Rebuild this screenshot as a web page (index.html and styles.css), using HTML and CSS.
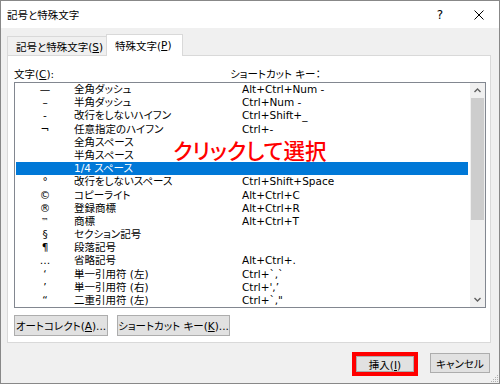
FILE: index.html
```html
<!DOCTYPE html>
<html lang="ja">
<head>
    <meta charset="UTF-8">
    <title>記号と特殊文字</title>
    <link rel="stylesheet" href="styles.css">
</head>
<body>
    <div class="window">
        <div class="titlebar">
            <span class="title">記号と特殊文字</span>
            <span class="help">?</span>
            <svg class="close" width="10" height="10" viewBox="0 0 10 10"><path d="M0.5 0.5 L9.5 9.5 M9.5 0.5 L0.5 9.5" stroke="#000" stroke-width="1" fill="none"/></svg>
        </div>
        <div class="content">
            <div class="tabs">
                <div class="tab">記号と特殊文字(<u>S</u>)</div>
                <div class="tab active">特殊文字(<u>P</u>)</div>
            </div>
            <div class="panel">
                <div class="headers">
                    <span class="col-char">文字(<u>C</u>):</span>
                    <span>ショートカット キー：</span>
                </div>
                <div class="listbox">
                    <div class="rows">
                        <div class="row"><span class="sym">—</span><span class="name">全角ダッシュ</span><span class="key">Alt+Ctrl+Num -</span></div>
                        <div class="row"><span class="sym">–</span><span class="name">半角ダッシュ</span><span class="key">Ctrl+Num -</span></div>
                        <div class="row"><span class="sym">-</span><span class="name">改行をしないハイフン</span><span class="key">Ctrl+Shift+_</span></div>
                        <div class="row"><span class="sym">¬</span><span class="name">任意指定のハイフン</span><span class="key">Ctrl+-</span></div>
                        <div class="row"><span class="sym"></span><span class="name">全角スペース</span><span class="key"></span></div>
                        <div class="row"><span class="sym"></span><span class="name">半角スペース</span><span class="key"></span></div>
                        <div class="row selected"><span class="sym"></span><span class="name">1/4 スペース</span><span class="key"></span></div>
                        <div class="row"><span class="sym">°</span><span class="name">改行をしないスペース</span><span class="key">Ctrl+Shift+Space</span></div>
                        <div class="row"><span class="sym">©</span><span class="name">コピーライト</span><span class="key">Alt+Ctrl+C</span></div>
                        <div class="row"><span class="sym">®</span><span class="name">登録商標</span><span class="key">Alt+Ctrl+R</span></div>
                        <div class="row"><span class="sym small">™</span><span class="name">商標</span><span class="key">Alt+Ctrl+T</span></div>
                        <div class="row"><span class="sym">§</span><span class="name">セクション記号</span><span class="key"></span></div>
                        <div class="row"><span class="sym">¶</span><span class="name">段落記号</span><span class="key"></span></div>
                        <div class="row"><span class="sym">…</span><span class="name">省略記号</span><span class="key">Alt+Ctrl+.</span></div>
                        <div class="row"><span class="sym">‘</span><span class="name">単一引用符 (左)</span><span class="key">Ctrl+`,`</span></div>
                        <div class="row"><span class="sym">’</span><span class="name">単一引用符 (右)</span><span class="key">Ctrl+',’</span></div>
                        <div class="row"><span class="sym">“</span><span class="name">二重引用符 (左)</span><span class="key">Ctrl+`,"</span></div>
                    </div>
                    <div class="scrollbar">
                        <div class="arrow"><svg width="7" height="5" viewBox="0 0 7 5"><path d="M0.5 4 L3.5 1 L6.5 4" stroke="#606060" stroke-width="1.4" fill="none"/></svg></div>
                        <div class="thumb"></div>
                        <div class="track"></div>
                        <div class="arrow"><svg width="7" height="5" viewBox="0 0 7 5"><path d="M0.5 1 L3.5 4 L6.5 1" stroke="#606060" stroke-width="1.4" fill="none"/></svg></div>
                    </div>
                </div>
                <div class="panel-buttons">
                    <button class="btn btn-auto">オートコレクト(<u>A</u>)...</button>
                    <button class="btn btn-shortcut">ショートカット キー(<u>K</u>)...</button>
                </div>
            </div>
            <div class="footer">
                <button class="btn btn-insert">挿入(<u>I</u>)</button>
                <button class="btn btn-cancel">キャンセル</button>
            </div>
        </div>
        <div class="note">クリックして選択</div>
        <svg class="grip" width="10" height="10" viewBox="0 0 10 10">
            <rect x="8" y="2" width="1" height="1" fill="#b0b0b0"/>
            <rect x="6" y="4" width="1" height="1" fill="#b0b0b0"/>
            <rect x="8" y="4" width="1" height="1" fill="#b0b0b0"/>
            <rect x="4" y="6" width="1" height="1" fill="#b0b0b0"/>
            <rect x="6" y="6" width="1" height="1" fill="#b0b0b0"/>
            <rect x="8" y="6" width="1" height="1" fill="#b0b0b0"/>
            <rect x="2" y="8" width="1" height="1" fill="#b0b0b0"/>
            <rect x="4" y="8" width="1" height="1" fill="#b0b0b0"/>
            <rect x="6" y="8" width="1" height="1" fill="#b0b0b0"/>
            <rect x="8" y="8" width="1" height="1" fill="#b0b0b0"/>
        </svg>
    </div>
</body>
</html>
```

FILE: styles.css
```css
body {
    margin: 0;
    font-family: "DejaVu Sans", "Noto Sans CJK JP", sans-serif;
    font-size: 10.5px;
    font-feature-settings: "palt";
    color: #000;
}
.window {
    position: relative;
    width: 500px;
    height: 384px;
    border: 1px solid #888;
    box-sizing: border-box;
    background-color: #f0f0f0;
    overflow: hidden;
}
.titlebar {
    height: 27px;
    background-color: #fff;
    display: flex;
    align-items: center;
    padding-left: 6px;
}
.title {
    font-size: 10.5px;
}
.help {
    margin-left: auto;
    width: 10px;
    text-align: center;
    font-size: 12px;
}
.close {
    margin-left: 29px;
    margin-right: 15px;
}
.content {
    padding: 6px 0 0 6px;
}
.tabs {
    display: flex;
    align-items: flex-end;
    height: 21px;
}
.tab {
    box-sizing: border-box;
    height: 19px;
    width: 100px;
    border: 1px solid #d9d9d9;
    border-bottom: none;
    display: flex;
    align-items: center;
    padding-left: 8px;
    padding-top: 1px;
}
.tab.active {
    position: relative;
    z-index: 1;
    width: 77px;
    height: 22px;
    margin-left: -1px;
    margin-bottom: -1px;
    background-color: #fff;
    padding-left: 8px;
    padding-bottom: 2px;
}
.panel {
    box-sizing: border-box;
    width: 484px;
    height: 288px;
    background-color: #fff;
    border: 1px solid #d9d9d9;
    padding: 8px 0 0 6px;
}
.headers {
    display: flex;
    height: 18px;
    align-items: center;
}
.col-char {
    width: 216px;
}
.listbox {
    box-sizing: border-box;
    width: 472px;
    height: 226px;
    border: 1px solid #828790;
    display: flex;
    overflow: hidden;
}
.rows {
    flex: 1;
    padding-left: 1px;
    padding-right: 2px;
}
.row {
    display: flex;
    height: 13.2px;
    line-height: 13.2px;
    white-space: nowrap;
}
.row.selected {
    background-color: #0078d7;
    color: #fff;
}
.sym {
    width: 58px;
    text-align: center;
}
.sym.small {
    font-size: 8px;
}
.name {
    width: 168px;
}
.scrollbar {
    width: 15px;
    display: flex;
    flex-direction: column;
    background-color: #f0f0f0;
}
.arrow {
    height: 15px;
    display: flex;
    align-items: center;
    justify-content: center;
}
.thumb {
    height: 122px;
    margin: 0 1px;
    background-color: #cdcdcd;
}
.track {
    flex: 1;
}
.panel-buttons {
    display: flex;
    gap: 9px;
    margin-top: 7px;
}
.btn {
    box-sizing: border-box;
    height: 21px;
    padding: 0;
    background-color: #e1e1e1;
    border: 1px solid #adadad;
    font-family: "DejaVu Sans", "Noto Sans CJK JP", sans-serif;
    font-size: 10.5px;
    font-feature-settings: "palt";
    color: #000;
}
.btn-auto {
    width: 94px;
}
.btn-shortcut {
    width: 113px;
}
.footer {
    display: flex;
    justify-content: flex-end;
    align-items: flex-start;
    padding-right: 9px;
}
.btn-insert {
    width: 58px;
    height: 16px;
    margin-top: 13px;
    outline: 4px solid #f00;
}
.btn-cancel {
    width: 60px;
    height: 20px;
    margin-top: 10px;
    margin-left: 16px;
}
.note {
    position: absolute;
    left: 172px;
    top: 136px;
    font-family: "Noto Sans CJK JP", sans-serif;
    font-size: 21.5px;
    font-weight: 500;
    line-height: 26px;
    color: #f00;
}
.grip {
    position: absolute;
    right: 0;
    bottom: 0;
}
```
